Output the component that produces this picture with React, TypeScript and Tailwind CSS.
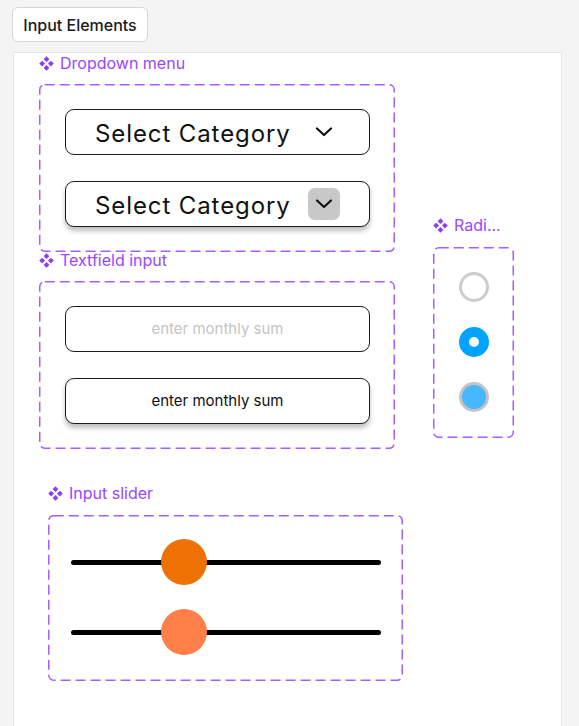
import React from 'react';

const font = { fontFamily: 'Inter, "Noto Sans", sans-serif' };

function ComponentIcon() {
  return (
    <svg width="15" height="15" viewBox="0 0 12 12" className="shrink-0">
      <path d="M6 0.2 L8.3 2.5 L6 4.8 L3.7 2.5 Z" fill="#8a3ff0" />
      <path d="M2.5 3.7 L4.8 6 L2.5 8.3 L0.2 6 Z" fill="#8a3ff0" />
      <path d="M9.5 3.7 L11.8 6 L9.5 8.3 L7.2 6 Z" fill="#8a3ff0" />
      <path d="M6 7.2 L8.3 9.5 L6 11.8 L3.7 9.5 Z" fill="#8a3ff0" />
    </svg>
  );
}

function SetLabel({ children }: { children: React.ReactNode }) {
  return (
    <div className="flex items-center gap-[6px] h-[20px] text-[16px] leading-[20px] text-[#9747ff] whitespace-nowrap">
      <ComponentIcon />
      <span>{children}</span>
    </div>
  );
}

// dashed frame drawn as an overlay so the dash length matches the design tool
function DashedFrame({ className, children }: { className: string; children: React.ReactNode }) {
  return (
    <div className={`relative ${className}`}>
      <svg className="absolute inset-0 w-full h-full pointer-events-none overflow-visible">
        <rect
          x="0.75"
          y="0.75"
          rx="5"
          className="w-[calc(100%-1.5px)] h-[calc(100%-1.5px)]"
          fill="none"
          stroke="#a160ff"
          strokeWidth="1.5"
          strokeDasharray="10 5"
        />
      </svg>
      {children}
    </div>
  );
}

function Chevron() {
  return (
    <svg width="18" height="10" viewBox="0 0 18 10">
      <path d="M2 1.5 L9 8 L16 1.5" fill="none" stroke="#111" strokeWidth="2.2" strokeLinecap="round" strokeLinejoin="round" />
    </svg>
  );
}

function SelectBox({ filled }: { filled?: boolean }) {
  return (
    <div
      className={`flex items-center h-[46px] rounded-[9px] border border-[#1c1c1c] bg-white pl-[29px] pr-[29px] ${
        filled ? 'shadow-[0_4px_5px_rgba(0,0,0,0.25)]' : ''
      }`}
    >
      <span className="text-[24px] leading-[28px] pt-[3px] text-[#111] tracking-[0.9px] flex-1">Select Category</span>
      {filled ? (
        <div className="w-[32px] h-[32px] rounded-[7px] bg-[#c8c8c8] flex items-center justify-center">
          <Chevron />
        </div>
      ) : (
        <div className="w-[32px] flex items-center justify-center">
          <Chevron />
        </div>
      )}
    </div>
  );
}

function TextBox({ active }: { active?: boolean }) {
  return (
    <div
      className={`flex items-center justify-center h-[46px] rounded-[9px] border border-[#1c1c1c] bg-white text-[15px] ${
        active ? 'text-[#111] shadow-[0_4px_5px_rgba(0,0,0,0.25)]' : 'text-[#c4c4c4]'
      }`}
    >
      enter monthly sum
    </div>
  );
}

function SliderRow({ color }: { color: string }) {
  return (
    <div className="relative h-[46px] flex items-center">
      <div className="w-full h-[5px] rounded-full bg-black" />
      <div className={`absolute left-[90px] top-0 w-[46px] h-[46px] rounded-full ${color}`} />
    </div>
  );
}

export default function App() {
  return (
    <div className="min-h-screen bg-[#f4f4f4] overflow-hidden" style={font}>
      <div className="pt-[7px] pl-[12px]">
        <button className="w-[136px] h-[35px] rounded-[6px] border border-[#d6d6d6] bg-white text-[16px] font-medium text-[#1a1a1a]">
          Input Elements
        </button>
      </div>

      <div className="ml-[13px] mt-[10px] w-[549px] h-[700px] bg-white border border-[#e4e4e4] pl-[25px]">
        <div className="flex items-start">
          {/* Left column: dropdowns + textfields */}
          <div className="flex flex-col w-[356px]">
            <SetLabel>Dropdown menu</SetLabel>
            <DashedFrame className="mt-[11px] h-[168px] pt-[25px] pl-[26px] pr-[25px]">
              <div className="flex flex-col gap-[26px]">
                <SelectBox />
                <SelectBox filled />
              </div>
            </DashedFrame>

            <div className="-mt-[2px]">
              <SetLabel>Textfield input</SetLabel>
            </div>
            <DashedFrame className="mt-[11px] h-[168px] pt-[25px] pl-[26px] pr-[25px]">
              <div className="flex flex-col gap-[26px]">
                <TextBox />
                <TextBox active />
              </div>
            </DashedFrame>
          </div>

          {/* Radio set */}
          <div className="ml-[38px] mt-[162px] flex flex-col">
            <SetLabel>Radi...</SetLabel>
            <DashedFrame className="mt-[12px] w-[81px] h-[191px] pt-[25px] flex flex-col items-center">
              <div className="flex flex-col items-center gap-[25px]">
                <div className="w-[30px] h-[30px] rounded-full border-[3px] border-[#cccccc] bg-white" />
                <div className="w-[30px] h-[30px] rounded-full border-[10px] border-[#00a3ff] bg-white" />
                <div className="w-[30px] h-[30px] rounded-full border-[3px] border-[#c4c4c4] bg-[#45b8ff]" />
              </div>
            </DashedFrame>
          </div>
        </div>

        {/* Slider set */}
        <div className="ml-[9px] mt-[34px] flex flex-col">
          <SetLabel>Input slider</SetLabel>
          <DashedFrame className="mt-[12px] w-[355px] h-[166px] pt-[24px] pl-[23px] pr-[22px]">
            <div className="flex flex-col gap-[24px]">
              <SliderRow color="bg-[#ee7203]" />
              <SliderRow color="bg-[#ff7f48]" />
            </div>
          </DashedFrame>
        </div>
      </div>
    </div>
  );
}
